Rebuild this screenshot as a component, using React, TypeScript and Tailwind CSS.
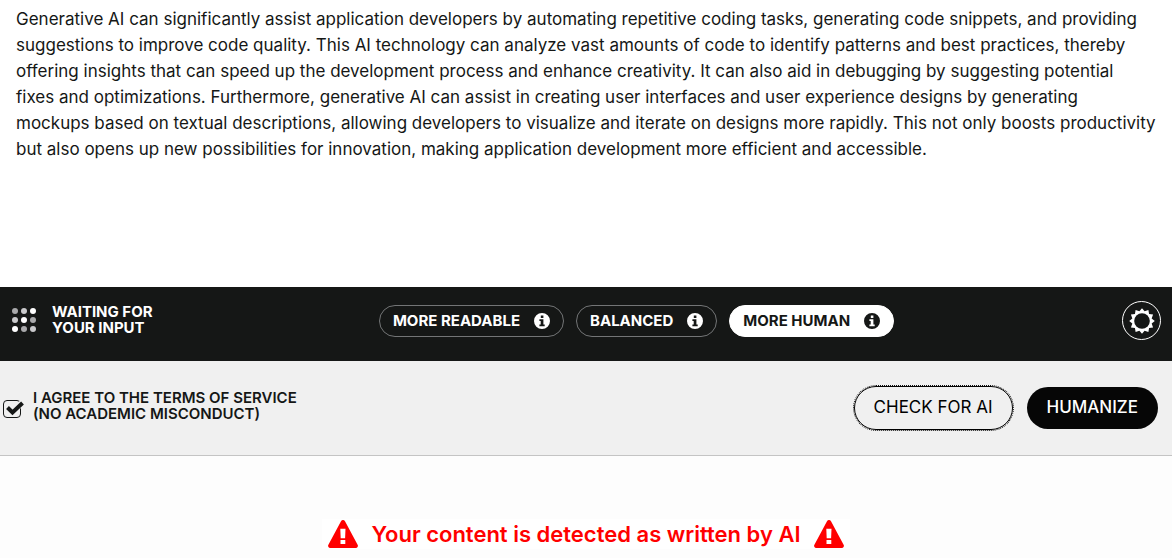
import { useState } from "react";
import clsx from "clsx";

const sampleText =
  "Generative AI can significantly assist application developers by automating repetitive coding tasks, generating code snippets, and providing suggestions to improve code quality. This AI technology can analyze vast amounts of code to identify patterns and best practices, thereby offering insights that can speed up the development process and enhance creativity. It can also aid in debugging by suggesting potential fixes and optimizations. Furthermore, generative AI can assist in creating user interfaces and user experience designs by generating mockups based on textual descriptions, allowing developers to visualize and iterate on designs more rapidly. This not only boosts productivity but also opens up new possibilities for innovation, making application development more efficient and accessible.";

const modes = ["MORE READABLE", "BALANCED", "MORE HUMAN"];

const dots = [
  "#a9a9ab",
  "#c9c9cb",
  "#ffffff",
  "#c9c9cb",
  "#ffffff",
  "#a9a9ab",
  "#ffffff",
  "#a9a9ab",
  "#c9c9cb",
];

const DotsIcon = () => (
  <svg width="24" height="24" viewBox="0 0 24 24" aria-hidden="true">
    {dots.map((fill, i) => (
      <circle
        key={i}
        cx={3 + (i % 3) * 9}
        cy={3 + Math.floor(i / 3) * 9}
        r="3"
        fill={fill}
      />
    ))}
  </svg>
);

const InfoIcon = () => (
  <svg
    width="16"
    height="16"
    viewBox="0 0 16 16"
    fill="currentColor"
    aria-hidden="true"
  >
    <path
      fillRule="evenodd"
      d="M8 0a8 8 0 1 0 0 16A8 8 0 0 0 8 0zM6.8 2.6h2.6v2.3H6.8zM5.4 6.2h4v5.2h1.3v1.9H5.4v-1.9h1.3V8.1H5.4z"
    />
  </svg>
);

const teeth = Array.from({ length: 24 }, (_, i) => {
  const radius = i % 2 === 0 ? 12.8 : 10;
  const angle = (i * Math.PI) / 12;
  return `${13 + radius * Math.sin(angle)},${13 - radius * Math.cos(angle)}`;
}).join(" ");

const GearIcon = () => (
  <svg width="26" height="26" viewBox="0 0 26 26" aria-hidden="true">
    <polygon points={teeth} fill="#ffffff" />
    <circle cx="13" cy="13" r="7.8" fill="#151716" />
  </svg>
);

const WarningIcon = () => (
  <svg width="30" height="28" viewBox="0 0 30 28" aria-hidden="true">
    <path
      d="M13 1.2a2.3 2.3 0 0 1 4 0l12.6 23.5a2.2 2.2 0 0 1-2 3.3H2.4a2.2 2.2 0 0 1-2-3.3z"
      fill="#ff0000"
    />
    <path d="M12.3 8.8h5.2l-.4 9.4h-4.4zM12.5 20h4.8v4h-4.8z" fill="#ffffff" />
  </svg>
);

const App = () => {
  const [mode, setMode] = useState("MORE HUMAN");
  const [agreed, setAgreed] = useState(true);

  return (
    <div className="min-h-screen bg-[#fdfdfd] font-['Inter','Liberation_Sans',sans-serif] text-[#151716]">
      <textarea
        aria-label="Your text"
        defaultValue={sampleText}
        spellCheck={false}
        rows={10}
        className="block w-full resize-none bg-white px-4 pt-[6px] pb-[21px] text-[17px] leading-[26px] outline-none"
      />

      <div className="flex items-center justify-between bg-[#151716] pt-[14px] pr-[11px] pb-[14px] pl-3 text-white">
        <div className="flex flex-1 items-center gap-4 pb-2">
          <DotsIcon />
          <p className="text-[15px] leading-4 font-bold whitespace-nowrap">
            WAITING FOR
            <br />
            YOUR INPUT
          </p>
        </div>
        <div className="flex gap-3 pb-[6px] lg:pl-[100px]">
          {modes.map((item) => (
            <button
              key={item}
              type="button"
              aria-pressed={mode === item}
              onClick={() => setMode(item)}
              className={clsx(
                "flex h-8 items-center gap-[14px] rounded-full border px-[13px] text-[15px] font-bold whitespace-nowrap",
                mode === item
                  ? "border-white bg-white text-[#151716]"
                  : "border-[#737576] text-white",
              )}
            >
              {item}
              <InfoIcon />
            </button>
          ))}
        </div>
        <div className="flex flex-1 justify-end pb-[7px]">
          <button
            type="button"
            aria-label="Settings"
            className="flex size-[39px] items-center justify-center rounded-full border border-white"
          >
            <GearIcon />
          </button>
        </div>
      </div>

      <div className="flex items-center justify-between border-b border-[#c4c4c4] bg-[#f0f0f0] py-[25px] pr-[14px] pl-[3px]">
        <label className="flex items-end gap-[9px] pb-1 text-[15px] leading-4 font-semibold">
          <span className="relative block h-[22px] w-[21px]">
            <input
              type="checkbox"
              checked={agreed}
              onChange={(e) => setAgreed(e.target.checked)}
              className="block size-[18px] appearance-none rounded-[4px] border border-[#151716]"
            />
            {agreed && (
              <svg
                width="21"
                height="18"
                viewBox="0 0 21 18"
                className="pointer-events-none absolute top-0 left-0"
                aria-hidden="true"
              >
                <path
                  d="M4 7l5 5L20 2"
                  fill="none"
                  stroke="#f0f0f0"
                  strokeWidth="6"
                />
                <path
                  d="M4.5 7.5L9.5 12.5L19.5 3"
                  fill="none"
                  stroke="#151716"
                  strokeWidth="4"
                />
              </svg>
            )}
          </span>
          <span>
            I AGREE TO THE TERMS OF SERVICE
            <br />
            (NO ACADEMIC MISCONDUCT)
          </span>
        </label>
        <div className="flex items-center gap-[14px]">
          <button
            type="button"
            className="h-11 rounded-full border border-black px-[19px] text-[17px] text-black outline-1 outline-dotted outline-[#101010]"
          >
            CHECK FOR AI
          </button>
          <button
            type="button"
            className="h-[42px] rounded-full bg-[#060606] px-5 text-[17px] font-medium text-white"
          >
            HUMANIZE
          </button>
        </div>
      </div>

      <div className="flex justify-center pt-[63px]">
        <p
          role="alert"
          className="flex items-center gap-[14px] bg-white px-[6px] text-[22px] leading-[30px] font-semibold text-[#ff0000]"
        >
          <WarningIcon />
          Your content is detected as written by AI
          <WarningIcon />
        </p>
      </div>
    </div>
  );
};

export default App;
